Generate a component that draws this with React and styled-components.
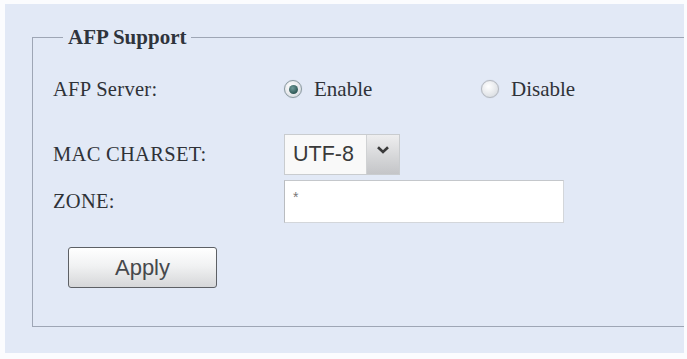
import React from 'react';
import styled, { createGlobalStyle } from 'styled-components';

const Global = createGlobalStyle`
html, body {
    margin:0;
    padding:0;
    background:#fbfcfe;
    overflow:hidden;
}
`;

const Page = styled.div`
width:687px;
height:359px;
padding:4px 3px 0 5px;
box-sizing:border-box;
`;

const Panel = styled.div`
height:349px;
background:#e2e9f6;
overflow:hidden;
padding-top:21px;
padding-left:27px;
box-sizing:border-box;
`;

const Fieldset = styled.fieldset`
margin:0;
width:700px;
border:1px solid #9ea6b5;
border-right:none;
padding:20px 0 38px 20px;
box-sizing:border-box;
`;

const Legend = styled.legend`
margin-left:10px;
padding:0 5px;
font-family:"Liberation Serif", serif;
font-weight:bold;
font-size:21px;
line-height:24px;
color:#2f343c;
`;

const Row = styled.div`
display:flex;
align-items:center;
height:${p => p.h}px;
margin-top:${p => p.mt || 0}px;
`;

const Label = styled.div`
width:231px;
font-family:"Liberation Serif", serif;
font-size:20.5px;
color:#2f3238;
letter-spacing:0.3px;
`;

const RadioItem = styled.label`
display:flex;
align-items:center;
gap:12px;
width:197px;
font-family:"Liberation Serif", serif;
font-size:21px;
color:#2f3238;
`;

const RadioDot = styled.span`
width:16px;
height:16px;
border-radius:50%;
border:1px solid ${p => p.checked ? '#8a9aa0' : '#b4b8bf'};
background:radial-gradient(circle at 40% 35%, #ffffff, #dfe2e6 70%, #c9ced4);
display:flex;
align-items:center;
justify-content:center;
box-shadow:0 0 1px rgba(0,0,0,0.2);
&::after{
    content:'';
    display:${p => p.checked ? 'block' : 'none'};
    width:9px;
    height:9px;
    border-radius:50%;
    background:radial-gradient(circle at 40% 35%, #6f9c9a, #2f5856 70%);
}
`;

const Select = styled.div`
display:flex;
width:116px;
height:41px;
border:1px solid #c9cccf;
box-sizing:border-box;
background:#f9f9f9;
`;

const SelectValue = styled.div`
flex:1;
display:flex;
align-items:center;
padding-left:8px;
font-family:"Liberation Sans", Arial, sans-serif;
font-size:21.5px;
color:#3a3a3a;
`;

const SelectArrow = styled.div`
width:33px;
display:flex;
justify-content:center;
padding-top:11px;
box-sizing:border-box;
border-left:1px solid #d0d2d4;
background:linear-gradient(#eeeeef, #d4d5d7 60%, #c4c5c8);
`;

const TextInput = styled.div`
width:280px;
height:43px;
box-sizing:border-box;
background:#fff;
border:1px solid #d3d6da;
border-left-color:#b9bcc0;
border-top-color:#c4c7cb;
padding:8px 0 0 8px;
font-family:"Liberation Sans", Arial, sans-serif;
font-size:14px;
color:#777;
`;

const ButtonRow = styled.div`
margin-top:24px;
padding-left:15px;
`;

const Button = styled.button`
width:149px;
height:41px;
border:1px solid #5d6065;
border-radius:3px;
background:linear-gradient(#ffffff, #f1f2f3 45%, #d6d7d9);
font-family:"Liberation Sans", Arial, sans-serif;
font-size:22px;
color:#46484c;
padding:0;
`;

const Chevron = () => (
    <svg width="12" height="8" viewBox="0 0 12 8">
        <path d="M1 1.2 L6 6 L11 1.2" fill="none" stroke="#3a3a3a" strokeWidth="2.6" />
    </svg>
);

const App = () => {
    return (
        <Page>
            <Global />
            <Panel>
                <Fieldset>
                    <Legend>AFP Support</Legend>
                    <Row h={40}>
                        <Label>AFP Server:</Label>
                        <RadioItem><RadioDot checked />Enable</RadioItem>
                        <RadioItem><RadioDot />Disable</RadioItem>
                    </Row>
                    <Row h={41} mt={25}>
                        <Label>MAC CHARSET:</Label>
                        <Select>
                            <SelectValue>UTF-8</SelectValue>
                            <SelectArrow><Chevron /></SelectArrow>
                        </Select>
                    </Row>
                    <Row h={43} mt={5}>
                        <Label>ZONE:</Label>
                        <TextInput>*</TextInput>
                    </Row>
                    <ButtonRow>
                        <Button>Apply</Button>
                    </ButtonRow>
                </Fieldset>
            </Panel>
        </Page>
    );
}

export default App;
